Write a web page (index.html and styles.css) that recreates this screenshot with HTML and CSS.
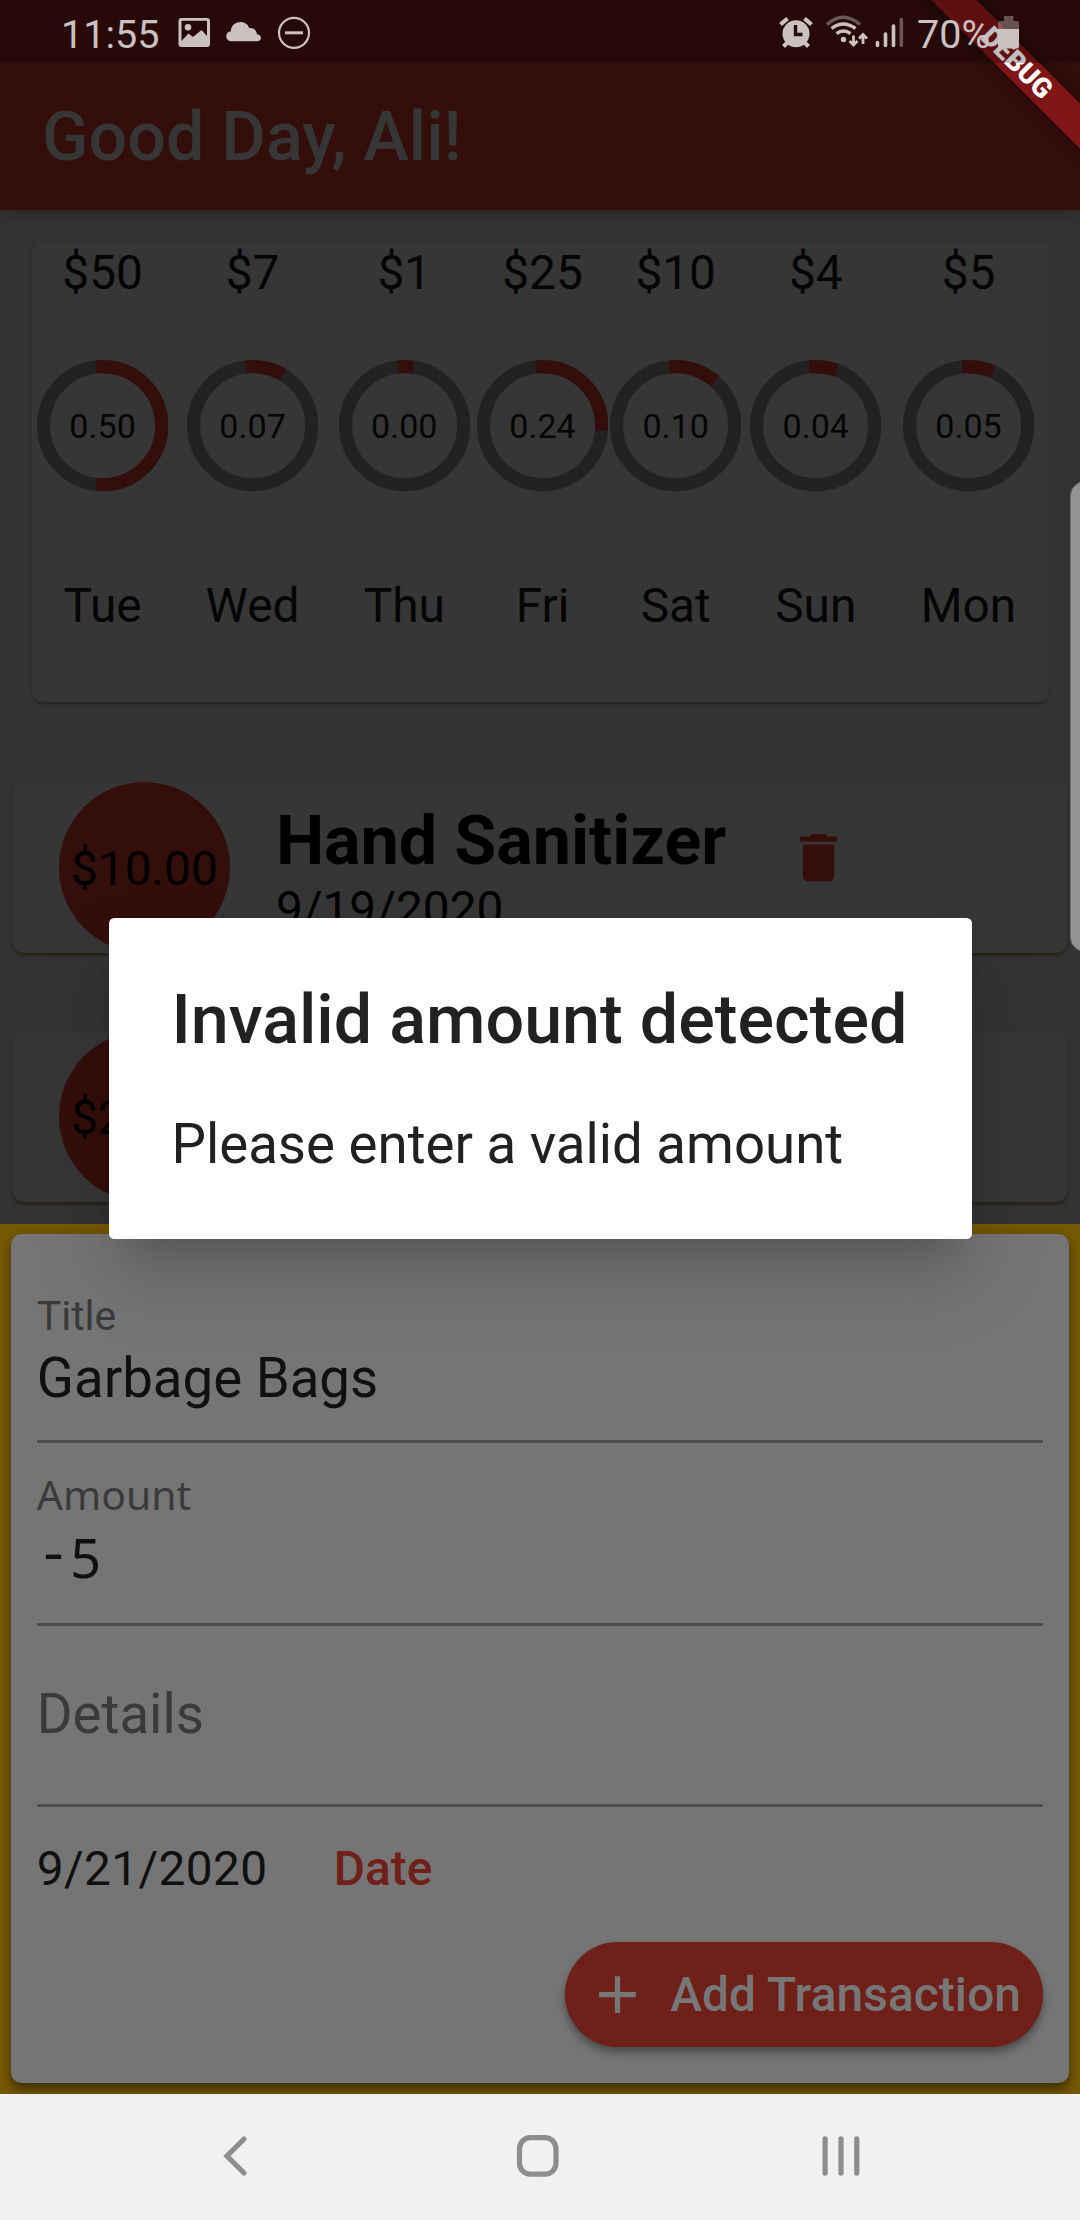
FILE: index.html
```html
<!DOCTYPE html>
<html lang="en">
<head>
<meta charset="utf-8">
<title>Good Day, Ali!</title>
<link rel="stylesheet" href="styles.css">
</head>
<body>
<div class="screen">
  <header class="header">
    <div class="status">
      <span class="clock">11:55</span>
      <svg class="status-left" width="90" height="63" viewBox="174 0 90 63">
        <path fill-rule="evenodd" d="M181.500 18h25.500a3 3 0 0 1 3 3v23a3 3 0 0 1-3 3h-25.500a3 3 0 0 1-3-3V21a3 3 0 0 1 3-3zM181.500 20.800V41l7-7.500 4.500 3.500 8.500-7 5.500 6V20.800zM188 24a3.300 3.300 0 1 1 0 6.600 3.300 3.300 0 0 1 0-6.600z"/>
        <path d="M231.500 41.200a5 5 0 0 1-.5-10c-.2-5.200 4.200-9.200 9.400-9.200 4.500 0 7.600 2.500 8.800 6 4.200-.6 7.400 2 7.800 6.300 5.300.5 5.300 6.900 0 6.900z"/>
      </svg>
      <svg width="36" height="63" viewBox="276 0 36 63"><circle class="line" cx="294" cy="32.800" r="15"/><path class="line thick" d="M285 32.800h18"/></svg>
      <div class="status-right">
        <svg width="134" height="63" viewBox="776 0 134 63">
          <circle cx="796" cy="33.800" r="13.500"/>
          <path class="bell" d="M780.500 24.500l7-6M804.500 18.500l7 6M787.500 42.500l-4 4M804.500 42.500l4 4"/>
          <path class="hand" d="M795.500 25v9.500h7"/>
          <path class="wave dim" d="M827 24.500q16-14.500 33 0"/>
          <path class="wave" d="M831.500 28.500q11.500-9 24 0M836.500 33.500q7-5 14 0"/>
          <circle cx="843.500" cy="39.500" r="2.700"/>
          <path class="arrow" d="M853.500 35.500v9M849.500 41l4 4 4-4M863 44V35M859 38.500l4-4 4 4"/>
          <path class="bar" d="M877.500 42.500v3M885.500 34v11.500M893.500 26v19.500"/>
          <path class="bar dim" d="M901.300 19.500v26"/>
        </svg>
        <span class="percent">70%</span>
        <svg width="24" height="63" viewBox="996 0 24 63"><path class="battery-top" d="M1004 16h9.500v5h3.500q2 0 2 2v6h-21v-6q0-2 2-2h4z"/><path d="M998 29h21v17q0 2.500-2 2.500h-17q-2 0-2-2.500z"/></svg>
      </div>
    </div>
    <h1 class="title">Good Day, Ali!</h1>
    <div class="ribbon">DEBUG</div>
  </header>

  <main class="content">
    <section class="chart card">
      <div class="day"><span class="amount">$50</span><div class="ring"><svg viewBox="0 0 131.250 131.250"><circle class="track" cx="65.625" cy="65.625" r="59.060"/><circle class="arc" pathLength="100" style="stroke-dasharray:49.900 100" cx="65.625" cy="65.625" r="59.060"/></svg><span>0.50</span></div><span>Tue</span></div>
      <div class="day"><span class="amount">$7</span><div class="ring"><svg viewBox="0 0 131.250 131.250"><circle class="track" cx="65.625" cy="65.625" r="59.060"/><circle class="arc" pathLength="100" style="stroke-dasharray:6.900 100" cx="65.625" cy="65.625" r="59.060"/></svg><span>0.07</span></div><span>Wed</span></div>
      <div class="day"><span class="amount">$1</span><div class="ring"><svg viewBox="0 0 131.250 131.250"><circle class="track" cx="65.625" cy="65.625" r="59.060"/><circle class="arc" pathLength="100" style="stroke-dasharray:0.500 100" cx="65.625" cy="65.625" r="59.060"/></svg><span>0.00</span></div><span>Thu</span></div>
      <div class="day"><span class="amount">$25</span><div class="ring"><svg viewBox="0 0 131.250 131.250"><circle class="track" cx="65.625" cy="65.625" r="59.060"/><circle class="arc" pathLength="100" style="stroke-dasharray:24.500 100" cx="65.625" cy="65.625" r="59.060"/></svg><span>0.24</span></div><span>Fri</span></div>
      <div class="day"><span class="amount">$10</span><div class="ring"><svg viewBox="0 0 131.250 131.250"><circle class="track" cx="65.625" cy="65.625" r="59.060"/><circle class="arc" pathLength="100" style="stroke-dasharray:9.800 100" cx="65.625" cy="65.625" r="59.060"/></svg><span>0.10</span></div><span>Sat</span></div>
      <div class="day"><span class="amount">$4</span><div class="ring"><svg viewBox="0 0 131.250 131.250"><circle class="track" cx="65.625" cy="65.625" r="59.060"/><circle class="arc" pathLength="100" style="stroke-dasharray:4 100" cx="65.625" cy="65.625" r="59.060"/></svg><span>0.04</span></div><span>Sun</span></div>
      <div class="day"><span class="amount">$5</span><div class="ring"><svg viewBox="0 0 131.250 131.250"><circle class="track" cx="65.625" cy="65.625" r="59.060"/><circle class="arc" pathLength="100" style="stroke-dasharray:5 100" cx="65.625" cy="65.625" r="59.060"/></svg><span>0.05</span></div><span>Mon</span></div>
    </section>

    <article class="transaction card">
      <div class="price">$10.00</div>
      <div class="info"><h2>Hand Sanitizer</h2><p>9/19/2020</p></div>
      <svg class="delete" viewBox="0 0 24 24"><path d="M6 19c0 1.100.9 2 2 2h8c1.100 0 2-.9 2-2V7H6v12zM19 4h-3.500l-1-1h-5l-1 1H5v2h14V4z"/></svg>
    </article>
    <article class="transaction card">
      <div class="price">$25.00</div>
    </article>
  </main>

  <section class="sheet">
    <form class="form">
      <div class="field first"><label>Title</label><span class="value">Garbage Bags</span></div>
      <div class="field second"><label class="alt">Amount</label><span class="value number"><span class="sign">-</span>5</span></div>
      <div class="field third"><span class="value hint">Details</span></div>
      <div class="date-row"><span>9/21/2020</span><b>Date</b></div>
      <div class="add"><svg viewBox="0 0 24 24"><path d="M19 13h-6v6h-2v-6H5v-2h6V5h2v6h6v2z"/></svg><span>Add Transaction</span></div>
    </form>
  </section>

  <nav class="nav">
    <svg width="1080" height="126" viewBox="0 0 1080 126">
      <path d="M244 45l-17 17 17 17"/>
      <rect x="519.500" y="43.700" width="36.500" height="36.500" rx="11"/>
      <path d="M825.100 44.800v34.300M841 44.800v34.300M856.800 44.800v34.300"/>
    </svg>
  </nav>

  <div class="edge-handle"></div>
  <div class="barrier">
    <div class="dialog" role="alertdialog">
      <h2>Invalid amount detected</h2>
      <p>Please enter a valid amount</p>
    </div>
  </div>
</div>
</body>
</html>
```
FILE: styles.css
```css
* { box-sizing: border-box; margin: 0; }
body { background: #333; font-family: Roboto, "Liberation Sans", sans-serif; font-size: 47.8px; line-height: 56px; color: #050505; }
svg { display: block; flex: none; }
.screen { position: relative; width: 1080px; height: 2220px; display: flex; flex-direction: column; overflow: hidden; background: #333; }

/* Status and app bar */
.header { position: relative; flex: none; height: 210px; background: #340e0b; box-shadow: 0 2px 12px rgba(0, 0, 0, .3); clip-path: inset(0 0 -30px 0); }
.status { position: relative; z-index: 3; height: 63px; padding: 0 60px 0 61px; background: rgba(0, 0, 0, .25); display: flex; align-items: center; color: #cbc1c0; font-size: 39.5px; line-height: 63px; fill: #cbc1c0; }
.clock { width: 113px; padding-top: 5px; }
.status-left { margin-right: 12px; }
.status-right { margin-left: auto; display: flex; align-items: center; }
.percent { width: 86px; padding: 5px 0 0 7px; white-space: nowrap; }
.line { fill: none; stroke: #cbc1c0; stroke-width: 2.2; }
.thick { stroke-width: 3; }
.bell, .wave, .arrow, .bar { fill: none; stroke: #cbc1c0; stroke-width: 3.4; }
.bell { stroke-width: 4.2; }
.hand { fill: none; stroke: #260a08; stroke-width: 3.4; }
.arrow { stroke-width: 2.8; }
.bar { stroke-width: 3.6; stroke-linecap: round; }
.wave.dim, .bar.dim { stroke: #6b5655; }
.battery-top { fill: rgba(203, 193, 192, .4); }
.title { padding-left: 42px; font-size: 68.25px; line-height: 148px; font-weight: 500; color: #363636; }
.ribbon { position: absolute; z-index: 2; left: 867px; top: 47px; width: 300px; height: 31.5px; line-height: 31.5px; transform: rotate(45deg); background: #801516; box-shadow: 0 0 16px rgba(0, 0, 0, .5); text-align: center; font-size: 27.5px; font-weight: 900; color: #fff; }

/* Week chart */
.content { flex: none; height: 1013.7px; padding-top: 31.7px; }
.card { background: #363636; border-radius: 10.5px; }
.chart { height: 460px; margin: 0 31.5px; box-shadow: 0 3px 3px -1px rgba(0, 0, 0, .25), 0 1px 3px rgba(0, 0, 0, .12); display: grid; grid-template-columns: 142.2px 157.8px 145.6px 130.8px 135.6px 144.6px 161px; }
.day { padding-top: 3px; display: flex; flex-direction: column; align-items: center; }
.ring { display: grid; place-items: center; width: 131.25px; height: 131.25px; margin: 59.6px 0 86px; font-size: 34.1px; }
.ring > * { grid-area: 1 / 1; }
.ring svg { width: 131.25px; height: 131.25px; transform: rotate(-90deg); }
.track, .arc { fill: none; stroke: #222; stroke-width: 13.12; }
.arc { stroke: #340e0b; stroke-linecap: square; }

/* Transactions */
.transaction { height: 171px; margin: 80.3px 13.1px 78px; padding-left: 45.8px; display: flex; color: #000; box-shadow: 0 3px 3px -1px rgba(32, 18, 0, .5), 0 2px 3px rgba(32, 18, 0, .25); }
.transaction + .transaction { margin-top: 0; }
.price { flex: none; width: 171px; height: 171px; border-radius: 50%; background: #340e0b; text-align: center; line-height: 174px; }
.info { width: 511px; padding: 19px 0 0 46px; }
.info h2 { font-size: 68.25px; line-height: 80px; white-space: nowrap; }
.delete { width: 63px; height: 63px; margin: 44px 0 0 46.5px; fill: #340e0b; }

/* Entry form */
.sheet { flex: none; height: 870.3px; padding: 10.6px; background: #755903; overflow: hidden; }
.form { height: 849.2px; padding: 0 26.2px; background: #757575; border-radius: 10.5px; box-shadow: 0 8px 12px rgba(0, 0, 0, .35), 0 2px 8px rgba(0, 0, 0, .15); color: #101010; }
.field { display: flex; flex-direction: column; border-bottom: 3px solid #4e4e4e; font-size: 54.6px; line-height: 64px; }
.field label { font-size: 40.95px; line-height: 48px; margin-bottom: 5.7px; color: #3a3a3a; }
.first { height: 208.4px; padding-top: 57.6px; }
.second { height: 183.3px; padding-top: 27px; }
.third { height: 181px; padding-top: 56px; }
.field .alt { font-family: "Noto Sans", sans-serif; margin-bottom: 7px; }
.number { display: flex; font-family: "Noto Sans", sans-serif; font-size: 54px; }
.sign { width: 33.5px; font-family: "Liberation Mono", monospace; font-size: 56px; }
.hint { color: #3a3a3a; }
.date-row { height: 134.7px; padding-top: 34px; display: flex; }
.date-row span { width: 297px; letter-spacing: .35px; }
.date-row b { font-weight: 500; color: #702019; }
.add { width: 478px; height: 105px; margin-left: auto; padding-left: 21px; border-radius: 52.5px; background: #6f2019; color: #777; fill: #777; display: flex; align-items: center; font-weight: 500; box-shadow: 0 6px 8px rgba(0, 0, 0, .3), 0 2px 5px rgba(0, 0, 0, .1); }
.add svg { width: 63px; height: 63px; margin-right: 21px; }
.add span { white-space: nowrap; padding-top: 1.5px; letter-spacing: .1px; }

.nav { flex: none; height: 126px; background: #f1f1f1; }
.nav svg { fill: none; stroke: #8d8d8d; stroke-width: 5.2; stroke-linecap: round; }

/* Overlays */
.edge-handle { position: absolute; left: 1069.5px; top: 481px; width: 30px; height: 471px; border: 1.5px solid #6e6e6e; border-radius: 17px; background: #939393; }
.barrier { position: absolute; inset: 63px 0 126px; display: flex; align-items: center; justify-content: center; }
.dialog { width: 863px; height: 320.4px; padding: 62px 63px; border-radius: 5.25px; background: #fff; color: #212121; box-shadow: 0 30px 30px -18px rgba(0, 0, 0, .12), 0 40px 80px rgba(0, 0, 0, .16); white-space: nowrap; }
.dialog h2 { font-size: 68.25px; line-height: 80px; font-weight: 500; }
.dialog p { margin-top: 52px; font-size: 54.6px; line-height: 64px; }
```
